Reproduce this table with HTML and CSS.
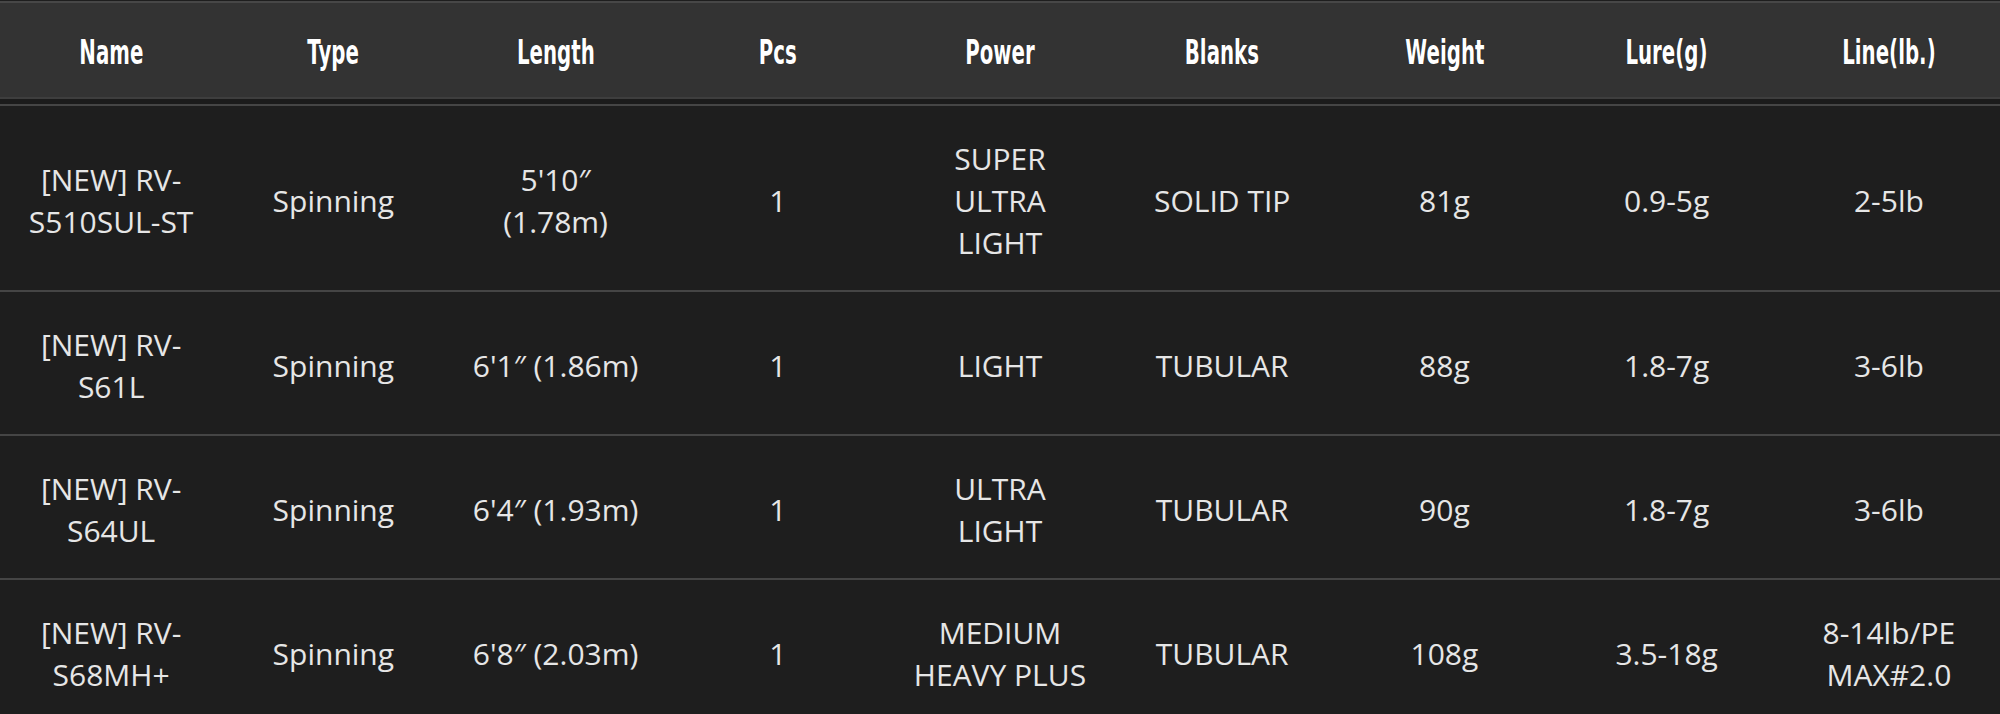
FILE: index.html
```html
<!DOCTYPE html>
<html lang="en">
<head>
<meta charset="utf-8">
<title>Rod specifications</title>
<link rel="stylesheet" href="styles.css">
</head>
<body>
<table class="spec">
  <thead>
    <tr>
      <th><span class="head">Name</span></th>
      <th><span class="head">Type</span></th>
      <th><span class="head">Length</span></th>
      <th><span class="head">Pcs</span></th>
      <th><span class="head">Power</span></th>
      <th><span class="head">Blanks</span></th>
      <th><span class="head">Weight</span></th>
      <th><span class="head">Lure(g)</span></th>
      <th><span class="head">Line(lb.)</span></th>
    </tr>
  </thead>
  <tbody>
    <tr>
      <td>[NEW] RV-S510SUL-ST</td>
      <td>Spinning</td>
      <td>5'10″ (1.78m)</td>
      <td>1</td>
      <td>SUPER ULTRA LIGHT</td>
      <td>SOLID TIP</td>
      <td>81g</td>
      <td>0.9-5g</td>
      <td>2-5lb</td>
    </tr>
    <tr>
      <td>[NEW] RV-S61L</td>
      <td>Spinning</td>
      <td>6'1″ (1.86m)</td>
      <td>1</td>
      <td>LIGHT</td>
      <td>TUBULAR</td>
      <td>88g</td>
      <td>1.8-7g</td>
      <td>3-6lb</td>
    </tr>
    <tr>
      <td>[NEW] RV-S64UL</td>
      <td>Spinning</td>
      <td>6'4″ (1.93m)</td>
      <td>1</td>
      <td>ULTRA LIGHT</td>
      <td>TUBULAR</td>
      <td>90g</td>
      <td>1.8-7g</td>
      <td>3-6lb</td>
    </tr>
    <tr>
      <td>[NEW] RV-S68MH+</td>
      <td>Spinning</td>
      <td>6'8″ (2.03m)</td>
      <td>1</td>
      <td>MEDIUM HEAVY PLUS</td>
      <td>TUBULAR</td>
      <td>108g</td>
      <td>3.5-18g</td>
      <td>8-14lb/PE MAX#2.0</td>
    </tr>
  </tbody>
</table>
</body>
</html>
```

FILE: styles.css
```css
html, body {
  margin: 0;
  padding: 0;
  background: #1e1e1e;
}

body {
  padding-top: 1px;
  font-family: "Open Sans", "Noto Sans", "DejaVu Sans", sans-serif;
}

.spec {
  width: 100%;
  table-layout: fixed;
  border-collapse: separate;
  border-spacing: 0;
}

.spec th {
  background: #333333;
  color: #ffffff;
  font-family: "DejaVu Sans", "Liberation Sans", sans-serif;
  font-weight: 700;
  font-size: 33px;
  line-height: 96px;
  padding: 0;
  text-align: center;
  border-top: 2px solid #474747;
  border-bottom: 5px solid #1b1b1b;
  box-shadow: inset 0 -2px 0 #3e3e3e;
}

.head {
  display: inline-block;
  transform: translateY(2px) scaleX(0.6);
  text-shadow: 0 0 1px rgba(0, 0, 0, 0.6);
}

.spec td {
  color: #e6e6e6;
  font-size: 30px;
  line-height: 42px;
  padding: 32px 20px 26px;
  text-align: center;
  vertical-align: middle;
  border-top: 2px solid #454545;
}
```
